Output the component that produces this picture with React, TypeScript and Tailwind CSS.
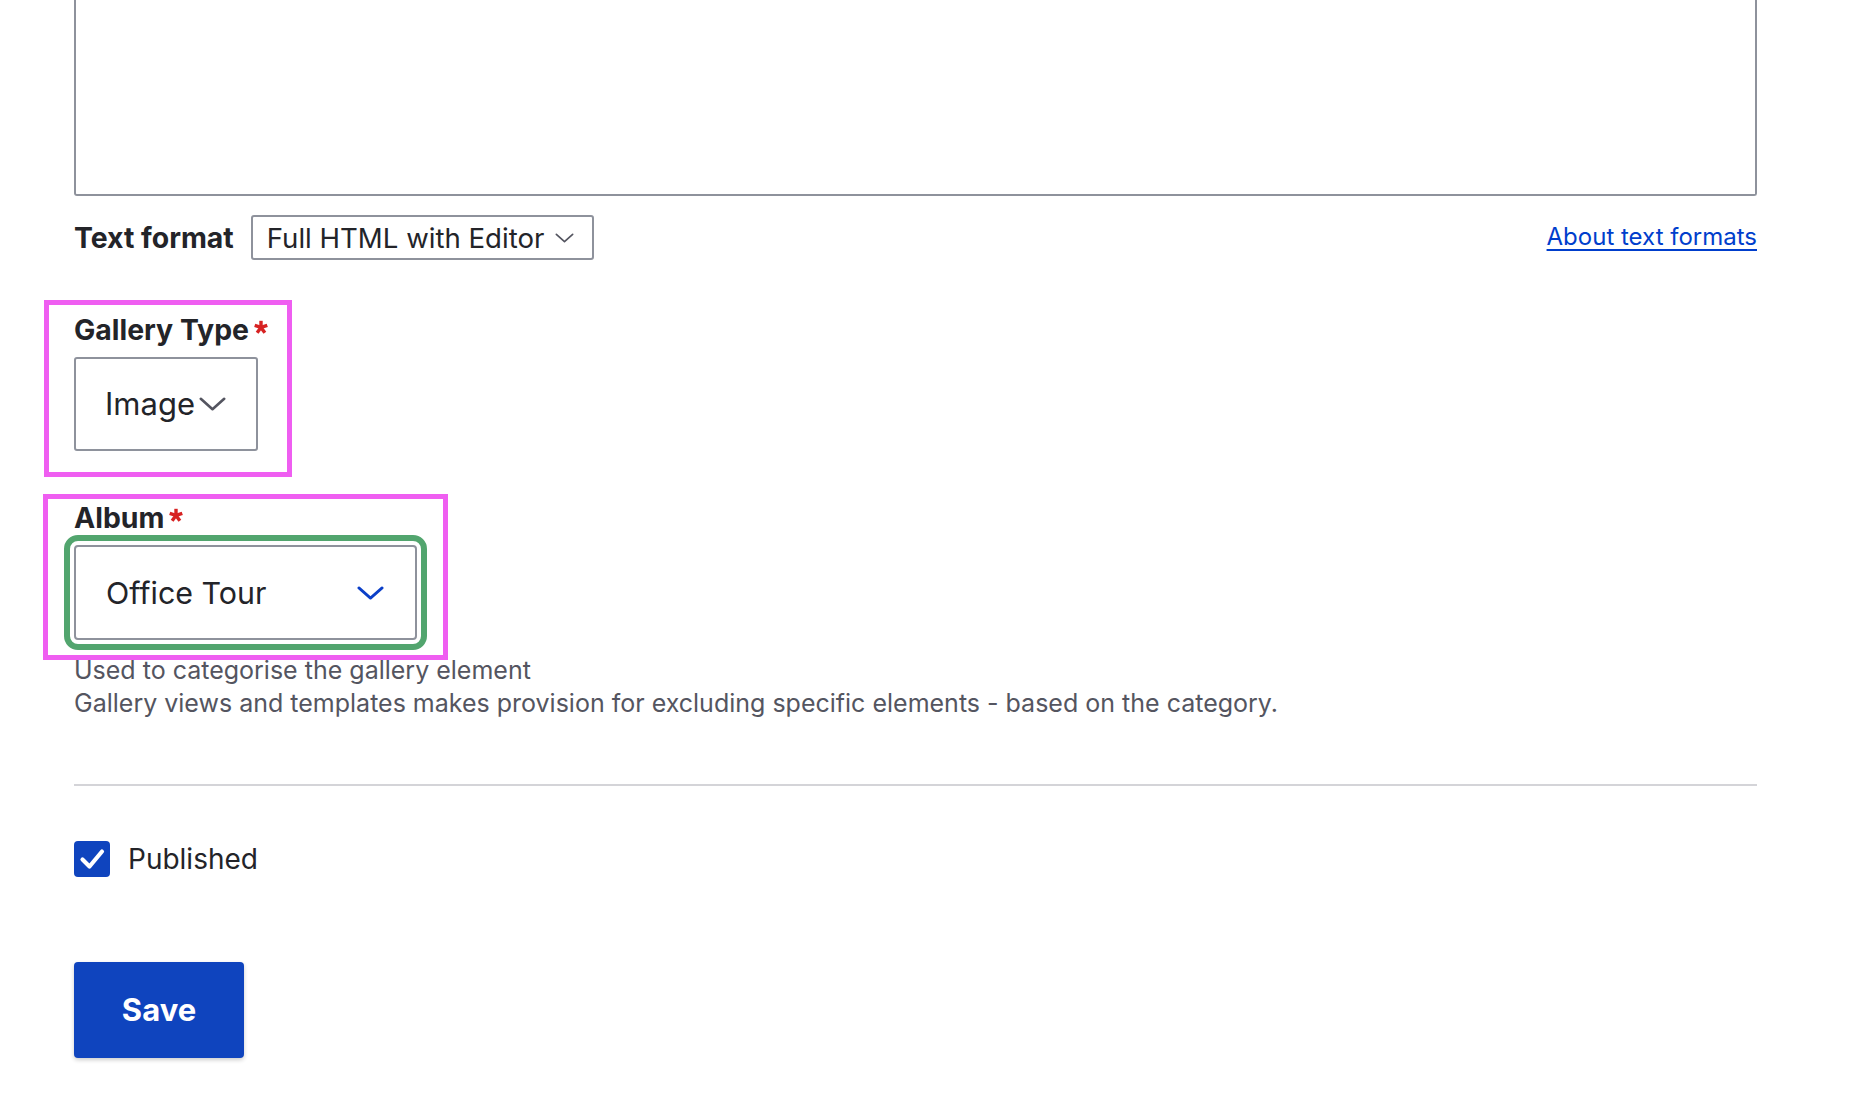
import React from "react";

function Chevron({ w, h, color, stroke }: { w: number; h: number; color: string; stroke: number }) {
  return (
    <svg width={w} height={h} viewBox={`0 0 ${w} ${h}`} fill="none">
      <path
        d={`M${stroke / 2 + 0.5} ${stroke / 2 + 0.5} L${w / 2} ${h - stroke / 2 - 0.5} L${w - stroke / 2 - 0.5} ${stroke / 2 + 0.5}`}
        stroke={color}
        strokeWidth={stroke}
        strokeLinecap="round"
        strokeLinejoin="round"
      />
    </svg>
  );
}

function Required() {
  // five-armed asterisk
  const arms = [-90, -18, 54, 126, 198];
  return (
    <svg width="14" height="14" viewBox="0 0 14 14" className="ml-[5px] mt-[8px] shrink-0">
      {arms.map((a) => {
        const r = (a * Math.PI) / 180;
        const x = 7 + Math.cos(r) * 6.6;
        const y = 7.4 + Math.sin(r) * 6.6;
        return <line key={a} x1="7" y1="7.4" x2={x} y2={y} stroke="#d72222" strokeWidth="3.4" />;
      })}
    </svg>
  );
}

export default function App() {
  return (
    <div
      className="w-[1876px] h-[1120px] overflow-hidden bg-white text-[#232429]"
      style={{ fontFamily: "Inter, 'Noto Sans', 'Liberation Sans', sans-serif" }}
    >
      <div className="pl-[74px] pr-[119px]">
        {/* textarea (top is cut off) */}
        <div className="h-[196px] border-x-2 border-b-2 border-[#8e929c] rounded-b-[3px] bg-white" />

        {/* text format row */}
        <div className="mt-[19px] h-[45px] flex items-center justify-between">
          <div className="flex items-center gap-[17px]">
            <span className="text-[28.4px] font-bold leading-[36px]">Text format</span>
            <div className="w-[343px] h-[45px] border-2 border-[#8e929c] rounded-[3px] flex items-center justify-between pl-[14px] pr-[18px]">
              <span className="text-[27.6px] leading-[36px]">Full HTML with Editor</span>
              <Chevron w={19} h={10} color="#545560" stroke={1.7} />
            </div>
          </div>
          <a className="mb-[2px] text-[24px] leading-[30px] text-[#003ecc] underline decoration-2 underline-offset-[4px]">
            About text formats
          </a>
        </div>

        {/* Gallery Type */}
        <div className="relative mt-[52px]">
          <div className="flex items-start">
            <span className="text-[28.4px] font-bold leading-[36px]">Gallery Type</span>
            <Required />
          </div>
          <div className="mt-[9px] w-[184px] h-[94px] border-2 border-[#8e929c] rounded-[3px] flex items-center justify-between pl-[29px] pr-[30px]">
            <span className="text-[31px] leading-[40px]">Image</span>
            <Chevron w={27} h={14} color="#545560" stroke={2.6} />
          </div>
          <div className="pointer-events-none absolute left-[-30px] top-[-12px] w-[248px] h-[177px] border-[5px] border-[#ef5ef1]" />
        </div>

        {/* Album */}
        <div className="relative mt-[49px]">
          <div className="flex items-start">
            <span className="text-[28.4px] font-bold leading-[36px]">Album</span>
            <Required />
          </div>
          <div className="mt-[9px] w-[343px] h-[95px] border-2 border-[#8e929c] rounded-[4px] outline-[6px] outline-solid outline-[#52a56e] outline-offset-[4px] flex items-center justify-between pl-[30px] pr-[31px]">
            <span className="text-[30.4px] leading-[40px]">Office Tour</span>
            <Chevron w={27} h={14} color="#0b3fc8" stroke={2.8} />
          </div>
          <div className="pointer-events-none absolute left-[-31px] top-[-6px] w-[405px] h-[166px] border-[5px] border-[#ef5ef1]" />
        </div>

        {/* description */}
        <div className="mt-[14px] text-[25px] leading-[33px] text-[#545560]">
          <div>Used to categorise the gallery element</div>
          <div>Gallery views and templates makes provision for excluding specific elements - based on the category.</div>
        </div>

        {/* divider */}
        <div className="mt-[64px] h-[2px] bg-[#d4d4d8]" />

        {/* Published */}
        <div className="mt-[55px] flex items-center h-[36px]">
          <div className="w-[36px] h-[36px] rounded-[4px] bg-[#0f44be] flex items-center justify-center">
            <svg width="36" height="36" viewBox="0 0 36 36" fill="none">
              <path d="M8.5 18.5 L15.5 25.5 L28 10.5" stroke="white" strokeWidth="4.2" strokeLinecap="round" strokeLinejoin="round" />
            </svg>
          </div>
          <span className="ml-[18px] text-[28px] leading-[36px]">Published</span>
        </div>

        {/* Save */}
        <div className="mt-[85px]">
          <button className="w-[170px] h-[96px] rounded-[4px] bg-[#0f44be] text-white text-[31px] font-bold shadow-[0_2px_4px_rgba(0,0,0,0.2)]">
            Save
          </button>
        </div>
      </div>
    </div>
  );
}
